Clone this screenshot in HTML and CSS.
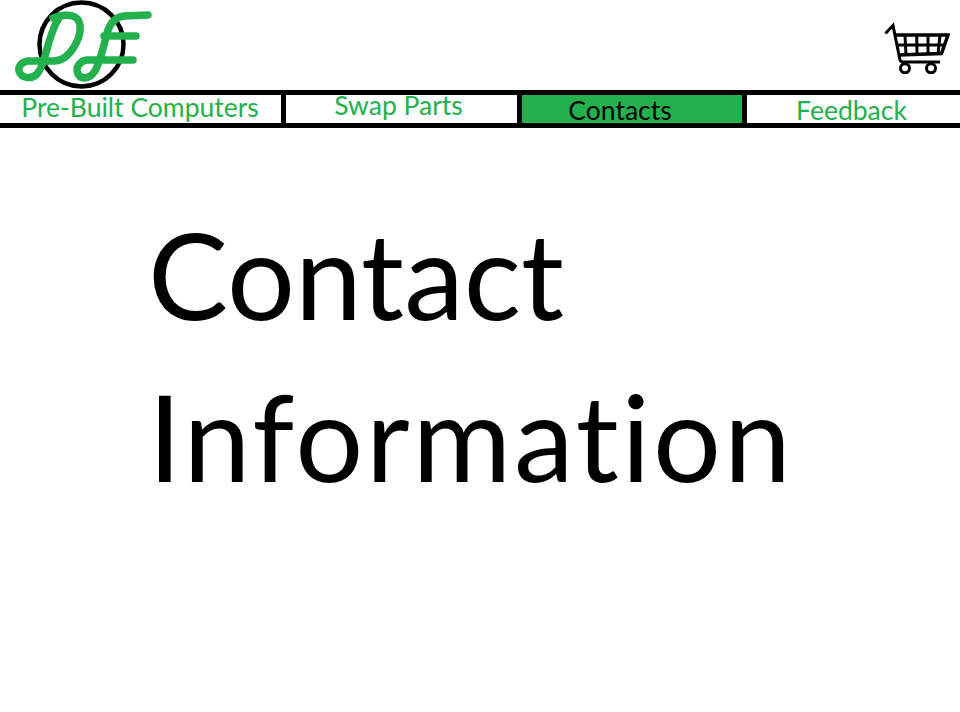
FILE: index.html
```html
<!DOCTYPE html>
<html lang="en">
<head>
<meta charset="utf-8">
<title>Contact Information</title>
<link rel="stylesheet" href="styles.css">
</head>
<body>
<header class="top">
  <svg class="logo" width="160" height="90" viewBox="0 0 160 90" aria-label="DF logo">
    <circle cx="81.500" cy="44.500" r="42" fill="none" stroke="#000" stroke-width="4.500"/>
    <g fill="none" stroke="#22b14c" stroke-width="7.500" stroke-linecap="round" stroke-linejoin="round">
      <path d="M53 18C60 15 70 14 75 17C83 22 81 36 74 47C69 55 63 61 54 61L28 61C21 62 18 67 19 71C21 78 31 80 37 74C43 68 46 52 49 42C52 32 55 24 59 18"/>
      <path d="M148 15L124 16C115 17 110 23 107 33C104 45 100 62 95 71C90 79 81 80 78 74C75 67 80 61 87 60L133 60"/>
      <path d="M104 36L136 36"/>
    </g>
  </svg>
  <svg class="cart" width="66" height="52" viewBox="0 0 66 52" aria-label="Shopping cart">
    <g fill="none" stroke="#000">
      <path stroke-width="3" d="M1.500 11.500L9 3.500L16 38C16.500 39.500 17.500 40 19 40L56 40"/>
      <path stroke-width="3.500" d="M11 13L64 13L57.500 31.500L14 33"/>
      <path stroke-width="3" d="M12.500 23L61 23"/>
      <path stroke-width="3" d="M21 13L22 33M32.700 13L33 32.500M44 13L44 32M56 13L54 32"/>
      <circle cx="21" cy="46.300" r="4.500" stroke-width="3"/>
      <circle cx="47" cy="46.300" r="4.500" stroke-width="3"/>
    </g>
  </svg>
</header>
<nav class="nav">
  <a class="tab tab-built">Pre-Built Computers</a>
  <a class="tab tab-swap">Swap Parts</a>
  <a class="tab tab-contacts">Contacts</a>
  <a class="tab tab-feedback">Feedback</a>
</nav>
<main class="content">
  <h1 class="title">Contact<br><span class="title-wide">Information</span></h1>
</main>
</body>
</html>
```
FILE: styles.css
```css
html, body {
  margin: 0;
  padding: 0;
  background: #fff;
}
body {
  width: 960px;
  height: 712px;
  overflow: hidden;
  font-family: "Lato", "Liberation Sans", sans-serif;
  font-variant-ligatures: none;
  color: #000;
}
.top {
  height: 90px;
  display: flex;
  justify-content: space-between;
  padding-right: 10px;
}
.logo {
  display: block;
}
.cart {
  display: block;
  margin-top: 22px;
}
.nav {
  height: 28px;
  border-top: 5px solid #000;
  border-bottom: 5px solid #000;
  display: flex;
}
.tab {
  display: flex;
  justify-content: center;
  font-size: 26.500px;
  line-height: 24px;
  color: #22b14c;
  box-sizing: border-box;
  border-right: 5px solid #000;
}
.tab-built { width: 286px; padding-right: 1px; }
.tab-swap { width: 236px; padding-right: 6px; line-height: 20px; }
.tab-contacts { width: 225px; background: #22b14c; color: #000; padding-top: 3px; padding-right: 24px; }
.tab-feedback { width: 213px; border-right: 0; padding-top: 3px; padding-right: 4px; }
.content {
  padding: 65px 0 0 148px;
}
.title {
  margin: 0;
  font-size: 120px;
  font-weight: 400;
  line-height: 162px;
}
.title-wide {
  letter-spacing: 2.800px;
}
```
